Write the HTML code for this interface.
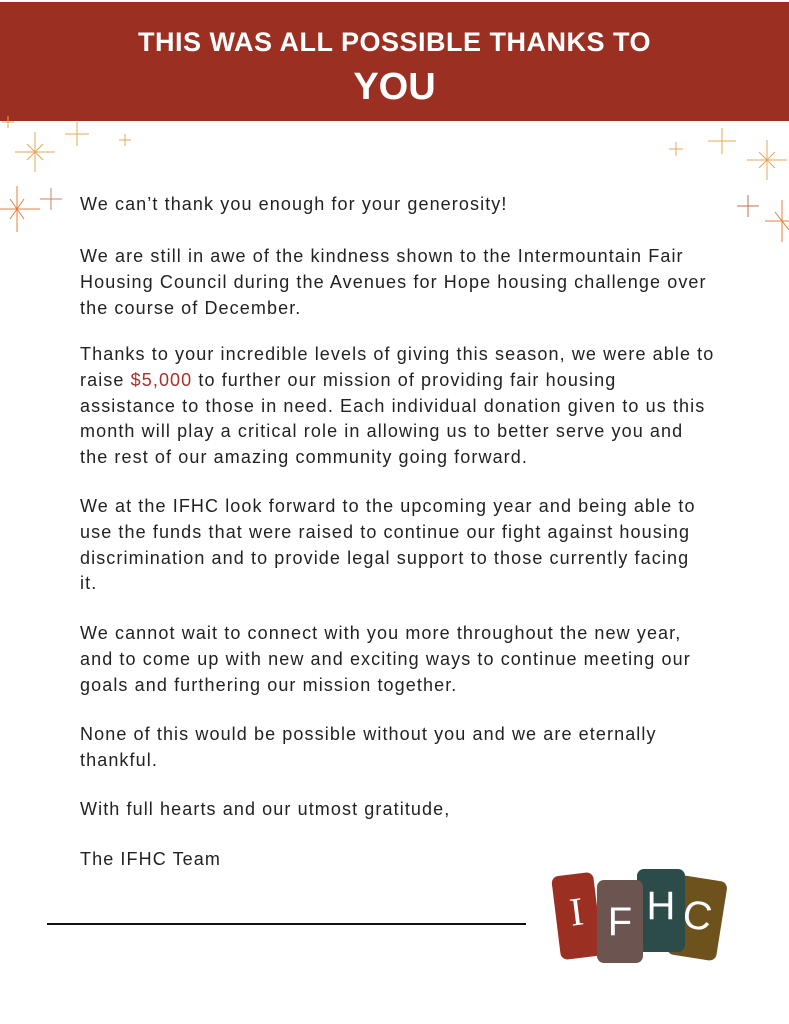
<!DOCTYPE html>
<html><head><meta charset="utf-8"><style>
body{margin:0;width:789px;height:1024px;background:#fff;position:relative;overflow:hidden;font-family:"Liberation Sans",sans-serif}
.hdr{position:absolute;left:0;top:2px;width:789px;height:119px;background:#9b2f22;color:#fff;text-align:center}
.h1{position:absolute;top:25px;width:100%;font-size:27px;font-weight:bold;letter-spacing:0.5px}
.h2{position:absolute;top:64px;width:100%;font-size:38px;font-weight:bold}
.t{position:absolute;left:80px;font-size:18px;letter-spacing:1.1px;line-height:25.8px;color:#222;white-space:nowrap}
.red{color:#a8322a}
.card{position:absolute;border-radius:7px;color:#fff;font-size:40px;text-align:center}
</style></head><body>
<div class="hdr"><div class="h1">THIS WAS ALL POSSIBLE THANKS TO</div><div class="h2">YOU</div></div>
<svg style="position:absolute;left:0;top:0" width="789" height="260">
<g stroke="#e3a857" stroke-width="1">
<path d="M35 132V172M15 152H55M27 144L43 160M43 144L27 160" />
<path d="M77 122V146M65 134H89"/>
<path d="M125 134V146M119 140H131"/>
<path d="M17 186V232M0 209H40M10 199L24 219M24 199L10 219" stroke="#e08040"/>
<path d="M51 188V210M40 199H62" stroke="#d08060"/>
<path d="M767 140V180M747 160H787M759 152L775 168M775 152L759 168"/>
<path d="M722 128V154M708 141H736"/>
<path d="M676 142V156M669 149H683"/>
<path d="M748 195V217M737 206H759" stroke="#c07050"/>
<path d="M782 200V242M765 221H789M775 212L789 230" stroke="#e08040"/>
<path d="M8 116V128M2 122H14"/>
</g></svg>
<div class="t" style="top:192px">We can’t thank you enough for your generosity!</div>
<div class="t" style="top:244px">We are still in awe of the kindness shown to the Intermountain Fair<br>Housing Council during the Avenues for Hope housing challenge over<br>the course of December.</div>
<div class="t" style="top:342px">Thanks to your incredible levels of giving this season, we were able to<br>raise <span class="red">$5,000</span> to further our mission of providing fair housing<br>assistance to those in need. Each individual donation given to us this<br>month will play a critical role in allowing us to better serve you and<br>the rest of our amazing community going forward.</div>
<div class="t" style="top:494px">We at the IFHC look forward to the upcoming year and being able to<br>use the funds that were raised to continue our fight against housing<br>discrimination and to provide legal support to those currently facing<br>it.</div>
<div class="t" style="top:621px">We cannot wait to connect with you more throughout the new year,<br>and to come up with new and exciting ways to continue meeting our<br>goals and furthering our mission together.</div>
<div class="t" style="top:722px">None of this would be possible without you and we are eternally<br>thankful.</div>
<div class="t" style="top:797px">With full hearts and our utmost gratitude,</div>
<div class="t" style="top:847px">The IFHC Team</div>
<div style="position:absolute;left:47px;top:923px;width:479px;height:2px;background:#111"></div>
<div class="card" style="left:556px;top:874px;width:42px;height:84px;background:#9b2f22;transform:rotate(-7deg);line-height:76px;font-family:'Liberation Serif',serif">I</div>
<div class="card" style="left:672px;top:878px;width:50px;height:80px;background:#6e521c;transform:rotate(9deg);line-height:76px">C</div>
<div class="card" style="left:637px;top:869px;width:48px;height:83px;background:#2c4c4a;line-height:74px">H</div>
<div class="card" style="left:597px;top:880px;width:46px;height:83px;background:#6c5450;line-height:84px">F</div>
</body></html>
